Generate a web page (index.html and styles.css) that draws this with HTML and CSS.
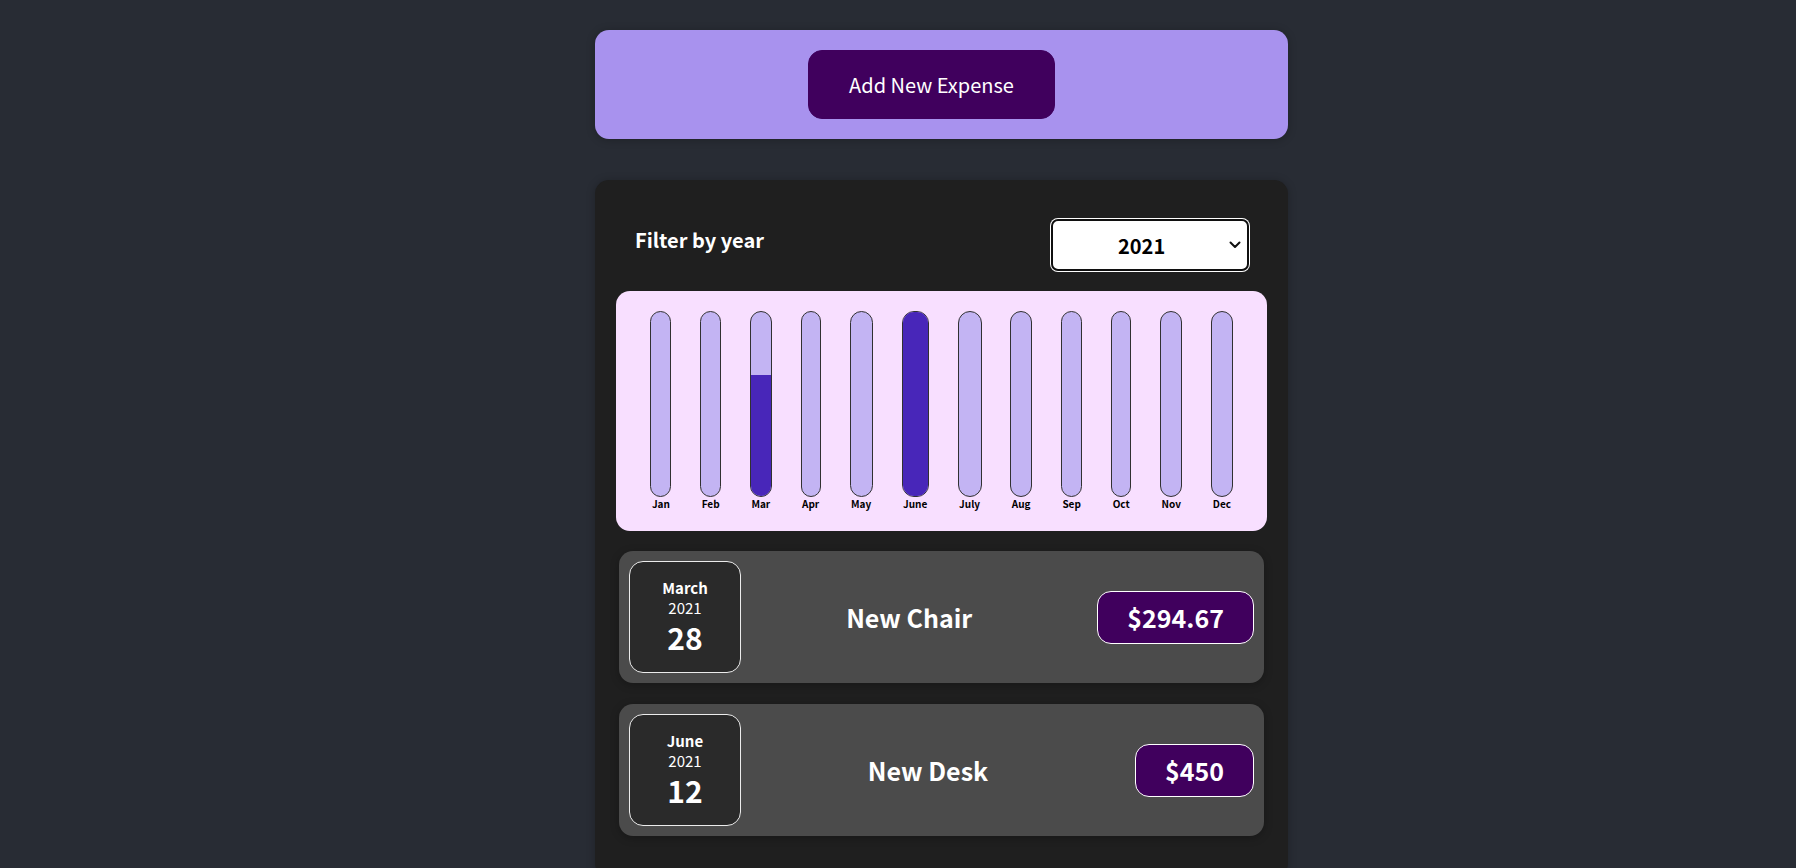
FILE: index.html
```html
<!DOCTYPE html>
<html lang="en">
<head>
<meta charset="utf-8">
<title>Expenses</title>
<link rel="stylesheet" href="styles.css">
</head>
<body>
<div class="app">
  <div class="new-expense">
    <button class="new-expense__btn">Add New Expense</button>
  </div>

  <div class="expenses">
    <div class="expenses-filter">
      <div class="expenses-filter__control">
        <label class="expenses-filter__label">Filter by year</label>
        <div class="select-wrap">
          <select class="year-select">
            <option>2022</option>
            <option selected>2021</option>
            <option>2020</option>
            <option>2019</option>
          </select>
          <svg class="select-arrow" width="12" height="8" viewBox="0 0 12 8"><path d="M1.5 1.5 L6 6 L10.5 1.5" fill="none" stroke="#111" stroke-width="2" stroke-linecap="round" stroke-linejoin="round"/></svg>
        </div>
      </div>
    </div>

    <div class="chart">
      <div class="chart-bar"><div class="chart-bar__inner"><div class="chart-bar__fill" style="height:0%"></div></div><div class="chart-bar__label">Jan</div></div>
      <div class="chart-bar"><div class="chart-bar__inner"><div class="chart-bar__fill" style="height:0%"></div></div><div class="chart-bar__label">Feb</div></div>
      <div class="chart-bar"><div class="chart-bar__inner"><div class="chart-bar__fill" style="height:65.5%"></div></div><div class="chart-bar__label">Mar</div></div>
      <div class="chart-bar"><div class="chart-bar__inner"><div class="chart-bar__fill" style="height:0%"></div></div><div class="chart-bar__label">Apr</div></div>
      <div class="chart-bar"><div class="chart-bar__inner"><div class="chart-bar__fill" style="height:0%"></div></div><div class="chart-bar__label">May</div></div>
      <div class="chart-bar"><div class="chart-bar__inner"><div class="chart-bar__fill" style="height:100%"></div></div><div class="chart-bar__label">June</div></div>
      <div class="chart-bar"><div class="chart-bar__inner"><div class="chart-bar__fill" style="height:0%"></div></div><div class="chart-bar__label">July</div></div>
      <div class="chart-bar"><div class="chart-bar__inner"><div class="chart-bar__fill" style="height:0%"></div></div><div class="chart-bar__label">Aug</div></div>
      <div class="chart-bar"><div class="chart-bar__inner"><div class="chart-bar__fill" style="height:0%"></div></div><div class="chart-bar__label">Sep</div></div>
      <div class="chart-bar"><div class="chart-bar__inner"><div class="chart-bar__fill" style="height:0%"></div></div><div class="chart-bar__label">Oct</div></div>
      <div class="chart-bar"><div class="chart-bar__inner"><div class="chart-bar__fill" style="height:0%"></div></div><div class="chart-bar__label">Nov</div></div>
      <div class="chart-bar"><div class="chart-bar__inner"><div class="chart-bar__fill" style="height:0%"></div></div><div class="chart-bar__label">Dec</div></div>
    </div>

    <ul class="expenses-list">
      <li class="expense-item">
        <div class="expense-date">
          <div class="expense-date__month">March</div>
          <div class="expense-date__year">2021</div>
          <div class="expense-date__day">28</div>
        </div>
        <h2 class="expense-item__title">New Chair</h2>
        <div class="expense-item__price">$294.67</div>
      </li>
      <li class="expense-item">
        <div class="expense-date">
          <div class="expense-date__month">June</div>
          <div class="expense-date__year">2021</div>
          <div class="expense-date__day">12</div>
        </div>
        <h2 class="expense-item__title">New Desk</h2>
        <div class="expense-item__price">$450</div>
      </li>
    </ul>
  </div>
</div>
</body>
</html>
```

FILE: styles.css
```css
* {
  box-sizing: border-box;
}

html {
  font-family: "Noto Sans CJK JP", "Noto Sans", sans-serif;
}

body {
  margin: 0;
  background-color: #282c34;
}

.app {
  width: 693px;
  margin: 30px 0 0 595px;
}

.new-expense {
  background-color: #a892ee;
  padding: 20px;
  border-radius: 14px;
  text-align: center;
  box-shadow: 0 1px 8px rgba(0, 0, 0, 0.25);
}

.new-expense__btn {
  display: inline-block;
  vertical-align: top;
  font-family: inherit;
  font-size: 20px;
  line-height: 30px;
  height: 69px;
  padding: 0 40px;
  border: 1px solid #40005d;
  background-color: #40005d;
  color: #fff;
  border-radius: 14px;
  margin-right: 20px;
  cursor: pointer;
}

.expenses {
  margin-top: 41px;
  padding: 20px;
  background-color: #1f1f1f;
  border-radius: 14px;
  box-shadow: 0 1px 8px rgba(0, 0, 0, 0.25);
}

.expenses-filter {
  color: #fff;
  padding: 0 20px;
}

.expenses-filter__control {
  display: flex;
  align-items: center;
  justify-content: space-between;
  margin: 19px 0 20px;
}

.expenses-filter__label {
  font-weight: bold;
  font-size: 20px;
  line-height: 28px;
  margin-bottom: 10px;
}

.select-wrap {
  position: relative;
  height: 52px;
  margin-right: -1px;
}

.year-select {
  display: block;
  appearance: none;
  -webkit-appearance: none;
  width: 198px;
  height: 52px;
  font-family: inherit;
  font-size: 20px;
  font-weight: bold;
  color: #000;
  padding: 0 0 0 65px;
  background-color: #fff;
  border: 2px solid #101010;
  border-radius: 7px;
  box-shadow: 0 0 0 1px #fff;
  outline: none;
}

.select-arrow {
  position: absolute;
  right: 8px;
  top: 22px;
  pointer-events: none;
}

.chart {
  padding: 20px;
  margin: 0 1px;
  border-radius: 14px;
  background-color: #f8dfff;
  display: flex;
  justify-content: space-around;
  height: 240px;
}

.chart-bar {
  height: 100%;
  display: flex;
  flex-direction: column;
  align-items: center;
}

.chart-bar__inner {
  flex: 1;
  width: calc(100% + 3px);
  border: 1px solid #313131;
  border-radius: 12px;
  background-color: #c3b4f3;
  overflow: hidden;
  display: flex;
  flex-direction: column;
  justify-content: flex-end;
}

.chart-bar__fill {
  background-color: #4826b9;
  width: 100%;
}

.chart-bar__label {
  font-weight: bold;
  font-size: 10px;
  line-height: 14px;
  height: 14px;
  color: #000;
  text-align: center;
}

.expenses-list {
  list-style: none;
  padding: 0;
  margin: 20px 4px 0;
}

.expense-item {
  display: flex;
  align-items: center;
  padding: 10px;
  margin-bottom: 21px;
  border-radius: 14px;
  background-color: #4b4b4b;
  box-shadow: 0 2px 8px rgba(0, 0, 0, 0.25);
}

.expense-date {
  display: flex;
  flex-direction: column;
  align-items: center;
  justify-content: center;
  width: 112px;
  height: 112px;
  border: 1px solid #ececec;
  background-color: #2a2a2a;
  color: #fff;
  border-radius: 14px;
  flex-shrink: 0;
}

.expense-date__month {
  font-size: 15px;
  font-weight: bold;
  line-height: 20px;
}

.expense-date__year {
  font-size: 15px;
  line-height: 20px;
}

.expense-date__day {
  font-size: 30px;
  font-weight: bold;
  line-height: 38px;
}

.expense-item__title {
  flex: 1;
  margin: 0 40px 0 20px;
  font-size: 25px;
  font-weight: bold;
  color: #fff;
  text-align: center;
}

.expense-item__price {
  font-size: 25px;
  font-weight: bold;
  line-height: 31px;
  color: #fff;
  background-color: #40005d;
  border: 1px solid #fff;
  padding: 10px 29px;
  border-radius: 14px;
}
```
